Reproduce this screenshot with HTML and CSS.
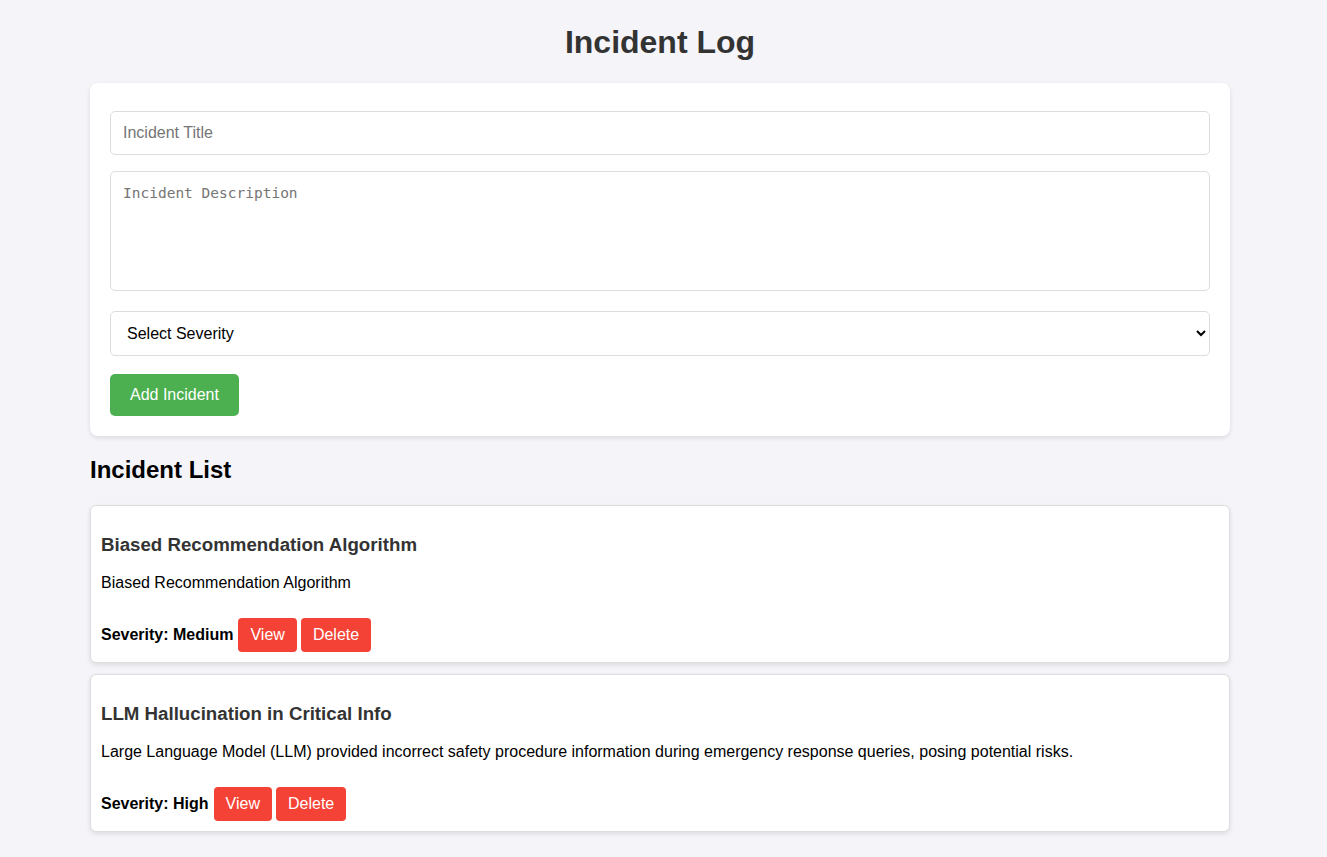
FILE: index.html
```html
<!DOCTYPE html>
<html lang="en">
<head>
<meta charset="utf-8">
<title>Incident Log</title>
<link rel="stylesheet" href="styles.css">
</head>
<body>
<div class="container">
  <h1 class="page-title">Incident Log</h1>
  <form class="form-card">
    <input class="field" type="text" placeholder="Incident Title">
    <textarea class="field area" placeholder="Incident Description"></textarea>
    <select class="field select">
      <option>Select Severity</option>
      <option>Low</option>
      <option>Medium</option>
      <option>High</option>
    </select>
    <div class="actions"><button type="button" class="btn-add">Add Incident</button></div>
  </form>
  <h2 class="list-title">Incident List</h2>
  <div class="list">
    <div class="incident">
      <h3 class="incident-title">Biased Recommendation Algorithm</h3>
      <p class="incident-desc">Biased Recommendation Algorithm</p>
      <div class="incident-row">
        <strong class="sev">Severity: Medium</strong>
        <button type="button" class="btn-red">View</button>
        <button type="button" class="btn-red">Delete</button>
      </div>
    </div>
    <div class="incident">
      <h3 class="incident-title">LLM Hallucination in Critical Info</h3>
      <p class="incident-desc">Large Language Model (LLM) provided incorrect safety procedure information during emergency response queries, posing potential risks.</p>
      <div class="incident-row">
        <strong class="sev">Severity: High</strong>
        <button type="button" class="btn-red">View</button>
        <button type="button" class="btn-red">Delete</button>
      </div>
    </div>
  </div>
</div>
</body>
</html>
```

FILE: styles.css
```css
* { box-sizing: border-box; }
html, body { margin: 0; padding: 0; }
body {
  background: #f4f4f9;
  font-family: "Liberation Sans", Arial, sans-serif;
  color: #000;
  padding-right: 7px;
}
.container {
  width: 1140px;
  margin: 0 auto;
  padding: 1px 0 20px;
}
.page-title {
  font-size: 32px;
  font-weight: bold;
  color: #333;
  text-align: center;
  margin: 23px 0 22px;
  line-height: 37px;
}
.form-card {
  background: #fff;
  border-radius: 8px;
  box-shadow: 0 2px 5px rgba(0,0,0,0.1);
  padding: 28px 20px 20px;
  display: flex;
  flex-direction: column;
}
.field {
  display: block;
  width: 100%;
  border: 1px solid #ddd;
  border-radius: 5px;
  font-family: "Liberation Sans", Arial, sans-serif;
  font-size: 16px;
  color: #000;
  background: #fff;
  margin: 0;
}
input.field {
  height: 44px;
  padding: 0 12px;
}
input.field::placeholder { color: #757575; }
.area {
  margin-top: 16px;
  height: 120px;
  padding: 12px;
  resize: none;
  font-family: "DejaVu Sans Mono", monospace;
  font-size: 14.5px;
  line-height: 19px;
}
.area::placeholder { color: #757575; }
.select {
  margin-top: 20px;
  height: 45px;
  padding: 0 12px;
}
.actions { margin-top: 18px; display: flex; }
.btn-add {
  background: #4caf50;
  color: #fff;
  border: none;
  border-radius: 5px;
  font-family: "Liberation Sans", Arial, sans-serif;
  font-size: 16px;
  height: 42px;
  padding: 0 20px;
  cursor: pointer;
}
.list-title {
  font-size: 24px;
  font-weight: bold;
  margin: 20px 0 21px;
  line-height: 28px;
  color: #000;
}
.list { display: flex; flex-direction: column; gap: 11px; }
.incident {
  background: #fff;
  border: 1px solid #ddd;
  border-radius: 6px;
  box-shadow: 0 2px 5px rgba(0,0,0,0.1);
  padding: 10px;
}
.incident-title {
  font-size: 18.7px;
  font-weight: bold;
  color: #333;
  margin: 18px 0 18px;
  line-height: 22px;
}
.incident-desc {
  font-size: 16px;
  margin: 0;
  line-height: 18px;
  color: #000;
}
.incident-row {
  display: flex;
  align-items: center;
  gap: 4px;
  margin-top: 26px;
}
.sev { font-size: 16px; font-weight: bold; margin-right: 1px; }
.btn-red {
  background: #f44336;
  color: #fff;
  border: none;
  border-radius: 4px;
  font-family: "Liberation Sans", Arial, sans-serif;
  font-size: 16px;
  height: 34px;
  padding: 0 12px;
  cursor: pointer;
}
```
